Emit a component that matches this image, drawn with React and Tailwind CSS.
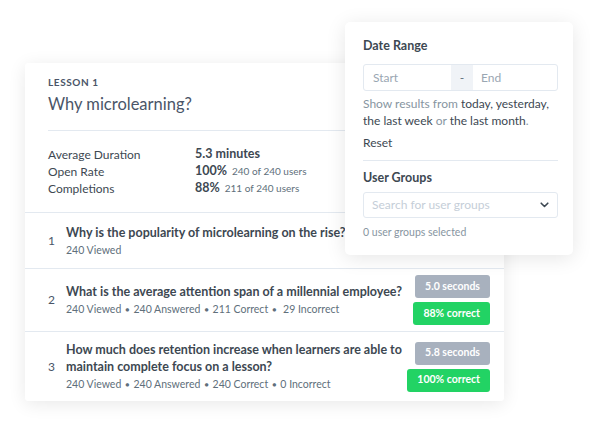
import React from 'react';

const Badge = ({ tone, children }) => (
  <div
    className={`h-[23px] px-[10px] rounded-[3px] flex items-center justify-center text-[10.5px] font-bold text-white ${tone === 'green' ? 'bg-[#22d364]' : 'bg-[#a8b1be]'}`}
  >
    {children}
  </div>
);

const Dot = () => <span className="mx-[4px] text-[7px] align-[1px]">●</span>;

const QuestionRow = ({ num, title, meta, seconds, correct, height }) => (
  <div className={`flex items-center border-t border-[#e3e9f0] pl-[23px] pr-[14px] ${height}`}>
    <div className="w-[18px] text-[12px] text-[#4a5568]">{num}</div>
    <div className="flex-1 pr-[2px]">
      <div className="text-[12.5px] leading-[17px] font-bold text-[#3d4852]">{title}</div>
      <div className="mt-[1px] text-[10.5px] leading-[16px] text-[#606f7b]">{meta}</div>
    </div>
    {seconds && (
      <div className="flex flex-col items-end gap-[4px]">
        <Badge>{seconds}</Badge>
        <Badge tone="green">{correct}</Badge>
      </div>
    )}
  </div>
);

const StatRow = ({ label, value, extra }) => (
  <div className="flex h-[17px] items-center">
    <div className="w-[147px] text-[12px] text-[#3d4852]">{label}</div>
    <div className="text-[12.5px] font-bold text-[#3d4852]">{value}</div>
    {extra && <div className="ml-[5px] text-[10px] text-[#606f7b]">{extra}</div>}
  </div>
);

const App = () => {
  return (
    <div className="relative w-[600px] h-[423px] bg-white overflow-hidden" style={{ fontFamily: 'Lato, "Open Sans", sans-serif' }}>
      <div className="pt-[63px] pl-[25px]">
        <div className="w-[479px] bg-white rounded-[3px] shadow-[0_3px_18px_rgba(0,0,0,0.09)]">
          <div className="pt-[12px] pl-[23px] pr-[23px]">
            <div className="text-[10px] leading-[14px] font-bold tracking-[0.06em] text-[#4a5568]">LESSON 1</div>
            <div className="mt-[5px] text-[16.5px] leading-[20px] text-[#4a5568]">Why microlearning?</div>
            <div className="mt-[16px] border-t border-[#e3e9f0]" />
            <div className="pt-[15px] pb-[15px]">
              <StatRow label="Average Duration" value="5.3 minutes" />
              <StatRow label="Open Rate" value="100%" extra="240 of 240 users" />
              <StatRow label="Completions" value="88%" extra="211 of 240 users" />
            </div>
          </div>
          <QuestionRow
            num="1"
            height="h-[56px]"
            title="Why is the popularity of microlearning on the rise?"
            meta="240 Viewed"
          />
          <QuestionRow
            num="2"
            height="h-[63px]"
            title="What is the average attention span of a millennial employee?"
            meta={<>240 Viewed<Dot />240 Answered<Dot />211 Correct<Dot /> 29 Incorrect</>}
            seconds="5.0 seconds"
            correct="88% correct"
          />
          <QuestionRow
            num="3"
            height="h-[70px]"
            title="How much does retention increase when learners are able to maintain complete focus on a lesson?"
            meta={<>240 Viewed<Dot />240 Answered<Dot />240 Correct<Dot />0 Incorrect</>}
            seconds="5.8 seconds"
            correct="100% correct"
          />
        </div>
      </div>

      <div className="absolute left-[345px] top-[22px] w-[228px] h-[233px] bg-white rounded-[5px] shadow-[0_3px_20px_rgba(0,0,0,0.1)] pt-[15px] pl-[18px] pr-[15px]">
        <div className="text-[12.5px] leading-[17px] font-bold text-[#3d4852]">Date Range</div>
        <div className="mt-[10px] flex h-[27px] border border-[#e3e9f0] rounded-[3px] text-[12px]">
          <div className="w-[87px] pl-[9px] flex items-center text-[#9aa6b2]">Start</div>
          <div className="w-[22px] bg-[#f0f3f7] flex items-center justify-center text-[#606f7b]">-</div>
          <div className="flex-1 pl-[8px] flex items-center text-[#9aa6b2]">End</div>
        </div>
        <div className="mt-[4px] text-[12px] leading-[17px] text-[#8795a1]">
          Show results from <span className="text-[#3d4852]">today, yesterday,</span>{' '}
          <span className="text-[#3d4852]">the last week</span> or <span className="text-[#3d4852]">the last month</span>.
        </div>
        <div className="mt-[5px] text-[12px] leading-[17px] text-[#3d4852]">Reset</div>
        <div className="mt-[9px] border-t border-[#e3e9f0]" />
        <div className="mt-[8px] text-[12.5px] leading-[17px] font-bold text-[#3d4852]">User Groups</div>
        <div className="mt-[6px] flex h-[26px] items-center justify-between border border-[#e3e9f0] rounded-[3px] pl-[8px] pr-[8px]">
          <span className="text-[12px] text-[#c5ced8]">Search for user groups</span>
          <svg width="9" height="6" viewBox="0 0 9 6" fill="none">
            <path d="M1.2 1.2 4.5 4.5 7.8 1.2" stroke="#3d4852" strokeWidth="1.6" strokeLinecap="round" strokeLinejoin="round" />
          </svg>
        </div>
        <div className="mt-[7px] text-[10.5px] leading-[14px] text-[#8795a1]">0 user groups selected</div>
      </div>
    </div>
  );
};

export default App;
